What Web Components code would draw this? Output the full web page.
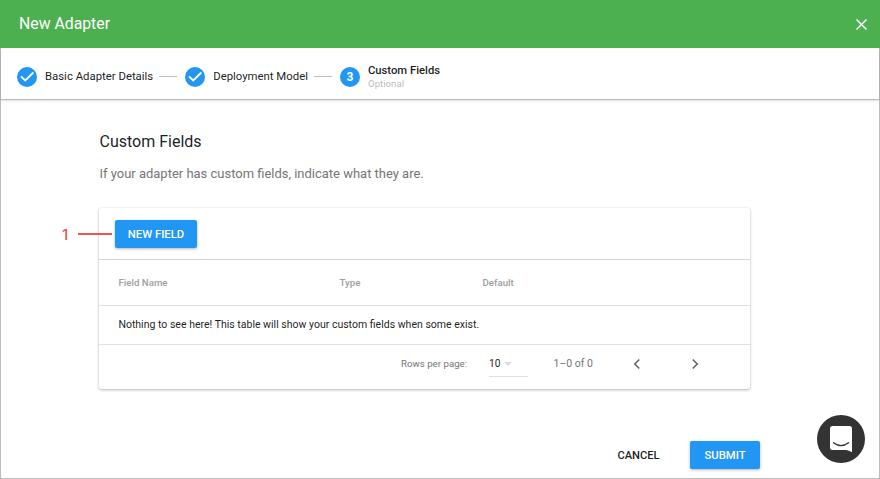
<!DOCTYPE html>
<html lang="en"><head><meta charset="utf-8"><title>New Adapter</title>
<style>html,body{margin:0;height:100%;background:#fff}body{font-family:Roboto,"Liberation Sans",sans-serif;color:rgba(0,0,0,.9);overflow:hidden}</style></head>
<body><adapter-dialog></adapter-dialog>
<script>
const define = (name, html, setup) => {
  const template = document.createElement('template');
  template.innerHTML = html;
  customElements.define(name, class extends HTMLElement {
    constructor() {
      super();
      this.attachShadow({ mode: 'open' }).append(template.content.cloneNode(true));
    }
    connectedCallback() { if (setup) setup(this, this.shadowRoot); }
  });
};

define('dialog-header', `<style>
:host{display:flex;box-sizing:border-box;height:48px;flex:none;align-items:center;justify-content:space-between;padding:0 12px 0 19px;background:#4caf50;color:#fff;font-size:15.8px;line-height:20px}
svg{display:block}
</style><span><slot></slot></span>
<svg width="13" height="13" viewBox="0 0 13 13"><path d="M1.5 1.5l10 10M11.5 1.5l-10 10" stroke="#fff" stroke-width="1.5" fill="none"/></svg>`);

define('step-item', `<style>
:host{display:flex;align-items:center;gap:8px;height:20px}
.dot{width:20px;height:20px;border-radius:50%;background:#2196f3;color:#fff;display:flex;align-items:center;justify-content:center;font:700 12px/20px Roboto,sans-serif}
.dot svg{display:none}:host([done]) .dot svg{display:block}
.label{font-size:11.36px;line-height:14px;padding-bottom:2px;white-space:nowrap}
:host([active]) .label{font-weight:500;font-size:11.25px;padding-bottom:1px}
small{display:block;font-weight:400;font-size:9.7px;line-height:12px;color:#bdbdbd}small:empty{display:none}
</style><div class="dot"><svg width="20" height="20" viewBox="0 0 20 20"><path d="M4 9.4l4.2 4 8.2-7.9" fill="none" stroke="#fff" stroke-width="1.9"/></svg><span></span></div>
<div class="label"><slot></slot><small></small></div>`, (el, root) => {
  root.querySelector('span').textContent = el.getAttribute('number') || '';
  root.querySelector('small').textContent = el.getAttribute('note') || '';
});

define('step-bar', `<style>
:host{display:flex;box-sizing:border-box;height:51px;flex:none;align-items:center;padding:7px 17px 0 16px;background:#fff;box-shadow:0 1px 1px rgba(0,0,0,.2),0 2px 3px rgba(0,0,0,.1)}
::slotted(i){width:18px;height:1px;background:#bdbdbd;flex:none;margin:0 8px 1px 6px}
</style><slot></slot>`);

define('raised-button', `<style>
:host{display:inline-flex;box-sizing:border-box;height:28px;align-items:center;justify-content:center;padding-top:1px;border-radius:2px;background:#2196f3;color:#fff;font-size:11.3px;font-weight:500;line-height:14px;box-shadow:0 1px 3px rgba(0,0,0,.3);white-space:nowrap}
:host([flat]){background:none;color:rgba(0,0,0,.9);box-shadow:none;font-size:11.15px}
</style><slot></slot>`);

define('table-pager', `<style>
:host{display:flex;height:44px;align-items:center;font-size:9.7px;color:#757575;line-height:14px;white-space:nowrap}
.rows{margin-left:302px;width:88px;padding-bottom:6px}
.select{box-sizing:border-box;width:39px;height:26px;border-bottom:1px solid #e0e0e0;display:flex;gap:4px;padding-top:6px;margin-top:-6px;color:rgba(0,0,0,.9);font-size:10.2px}
.select svg{margin-top:5px}.range{width:40px;margin-left:25.5px;font-size:10.5px;padding-bottom:6px}
.prev{margin-left:39.5px}.next{margin-left:49.5px}.nav{padding-bottom:7px}svg{display:block}
</style><span class="rows">Rows per page:</span><div class="select"><span>10</span><svg width="8" height="5"><path d="M0 0h8L4 4z" fill="#dcdcdc"/></svg></div>
<span class="range">1–0 of 0</span>
<svg class="nav prev" width="8" height="12" viewBox="0 0 8 12"><path d="M6.3 1.5L1.8 6l4.5 4.5" fill="none" stroke="#686868" stroke-width="1.7"/></svg>
<svg class="nav next" width="8" height="12" viewBox="0 0 8 12"><path d="M1.7 1.5L6.2 6l-4.5 4.5" fill="none" stroke="#686868" stroke-width="1.7"/></svg>`);

define('fields-card', `<style>
:host{display:block;position:relative;width:651px;height:181px;border-radius:2px;background:#fff;box-shadow:0 1px 3px rgba(0,0,0,.28),0 0 1px rgba(0,0,0,.16)}
.tools{box-sizing:border-box;height:52px;padding:12px 16px 0;border-bottom:1px solid #d4d4d4}
raised-button{width:82px}
.head{box-sizing:border-box;height:46px;padding:0 20px 0 19.5px;display:grid;grid-template-columns:221px 143px 1fr;align-items:center;border-bottom:1px solid #e0e0e0;font-size:9.7px;font-weight:500;line-height:14px;color:#9e9e9e}
.empty{box-sizing:border-box;height:39px;padding:0 19.4px 1px;display:flex;align-items:center;border-bottom:1px solid #e0e0e0;font-size:10.53px;line-height:14px;white-space:nowrap}
.callout{position:absolute;left:-38px;top:14px;display:flex;align-items:center;height:24px;color:#ef5350;font:500 15px/22px Inter,sans-serif}
.callout i{width:34px;height:2px;margin-left:8px;background:#ef5350}
.callout span{width:8px;margin-left:1px;padding-top:2px}
</style><div class="tools"><raised-button>NEW FIELD</raised-button></div>
<div class="head"><span>Field Name</span><span>Type</span><span>Default</span></div>
<div class="empty">Nothing to see here! This table will show your custom fields when some exist.</div>
<table-pager></table-pager>
<div class="callout"><span>1</span><i></i></div>`);

define('chat-launcher', `<style>
:host{display:block;position:absolute;right:15px;bottom:16px;width:48px;height:48px}svg{display:block}
</style><svg width="48" height="48" viewBox="0 0 48 48"><circle cx="24" cy="24" r="24" fill="#333"/><path d="M15.5 11h17a2.5 2.5 0 0 1 2.5 2.5v23.8q-3-2.1-6-2.3H15.5a2.5 2.5 0 0 1-2.5-2.5v-19a2.5 2.5 0 0 1 2.5-2.5z" fill="#fff"/><path d="M16.5 27.7q7.5 5.8 15 0" fill="none" stroke="#333" stroke-width="1.4" stroke-linecap="round"/></svg>`);

define('adapter-dialog', `<style>
:host{display:flex;flex-direction:column;position:relative;width:880px;height:479px}
.body{box-sizing:border-box;flex:1;display:flex;flex-direction:column;border:1px solid #bdbdbd;border-top:0;min-height:0}
main{padding:33px 0 0 98px}
h1{margin:0 0 0 .5px;font-size:16px;font-weight:400;line-height:20px}
p{margin:13px 0 25px .5px;font-size:12.97px;line-height:18px;color:#757575}
footer{display:flex;justify-content:flex-end;padding:52px 119px 0 0}
.cancel{width:62px;margin-right:20.5px}.submit{width:70px}
</style><dialog-header>New Adapter</dialog-header>
<div class="body"><step-bar><step-item done>Basic Adapter Details</step-item><i></i><step-item done>Deployment Model</step-item><i></i><step-item active number="3" note="Optional">Custom Fields</step-item></step-bar>
<main><h1>Custom Fields</h1><p>If your adapter has custom fields, indicate what they are.</p><fields-card></fields-card></main>
<footer><raised-button flat class="cancel">CANCEL</raised-button><raised-button class="submit">SUBMIT</raised-button></footer></div>
<chat-launcher></chat-launcher>`);
</script></body></html>
